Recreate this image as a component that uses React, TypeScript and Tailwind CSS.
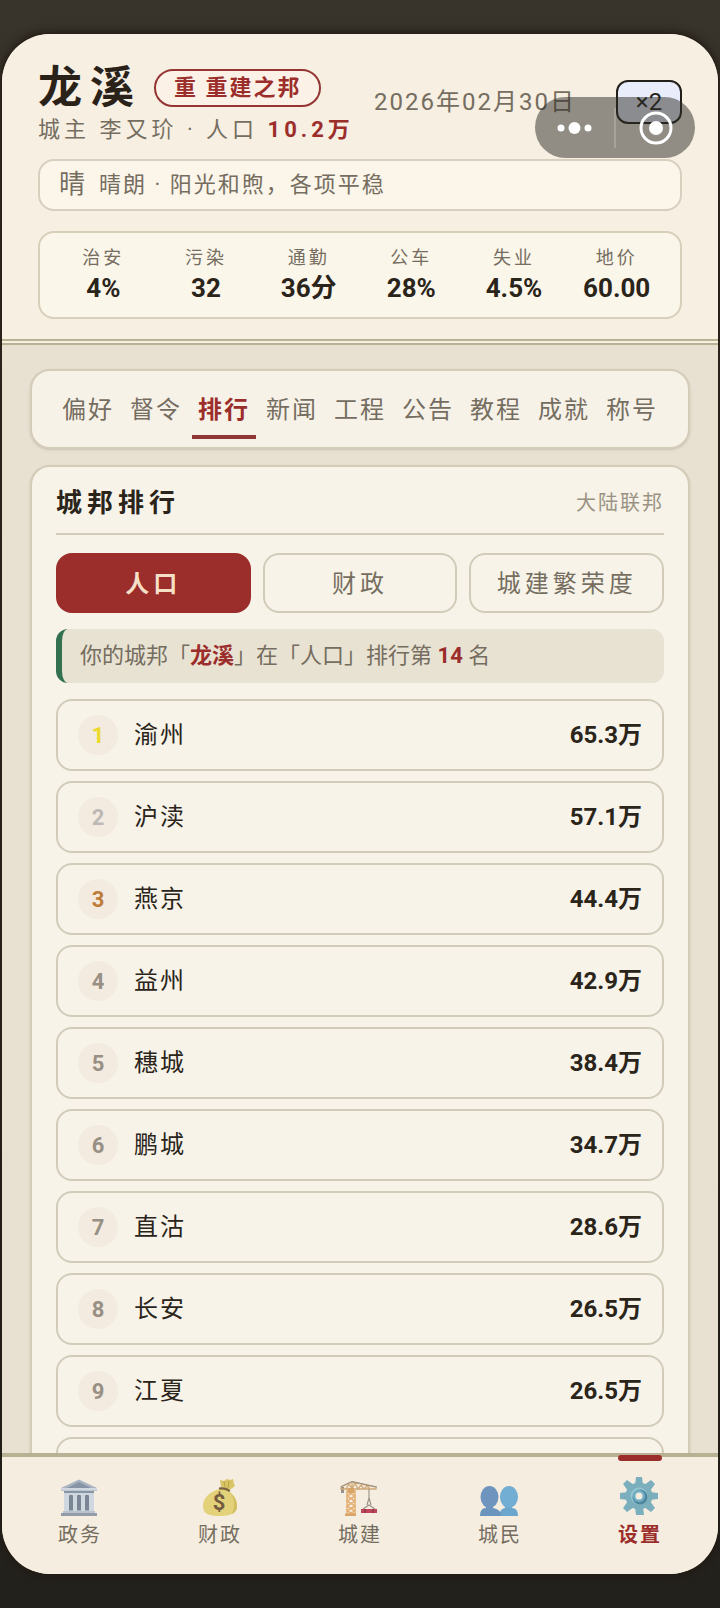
import { useState } from "react";
import type { ReactNode } from "react";
import clsx from "clsx";

const stats = [
  { label: "治安", value: "4%" },
  { label: "污染", value: "32" },
  { label: "通勤", value: "36分" },
  { label: "公车", value: "28%" },
  { label: "失业", value: "4.5%" },
  { label: "地价", value: "60.00" },
];

const sections = ["偏好", "督令", "排行", "新闻", "工程", "公告", "教程", "成就", "称号"];

const boards = ["人口", "财政", "城建繁荣度"];

const cities = [
  { name: "渝州", value: "65.3万" },
  { name: "沪渎", value: "57.1万" },
  { name: "燕京", value: "44.4万" },
  { name: "益州", value: "42.9万" },
  { name: "穗城", value: "38.4万" },
  { name: "鹏城", value: "34.7万" },
  { name: "直沽", value: "28.6万" },
  { name: "长安", value: "26.5万" },
  { name: "江夏", value: "26.5万" },
];

// gold, silver and bronze; everyone else is grey
const medals = ["text-[#ecd92c]", "text-[#bdb8b4]", "text-[#bf7d3c]"];

function HallIcon() {
  return (
    <svg viewBox="0 0 40 40" className="h-10 w-10" aria-hidden="true">
      <path d="M20 2.500 38 11v3H2v-3z" fill="#a9b4c1" />
      <path d="M20 5 32 11H8z" fill="#8794a6" />
      <path d="M2 11h36v2.500H2z" fill="#d0d7df" />
      <path d="M5 14h30v2H5z" fill="#8a95a4" />
      <path d="M5 16h30v19H5z" fill="#cfd7e1" />
      <path d="M10 18.500q2-1.500 4 0v15h-4zM18 18.500q2-1.500 4 0v15h-4zM26 18.500q2-1.500 4 0v15h-4z" fill="#7b8694" />
      <path d="M4 34h32v2.500H4z" fill="#b9c2cd" />
      <path d="M2 36h36v3H2z" fill="#929ba8" />
    </svg>
  );
}

function MoneyIcon() {
  return (
    <svg viewBox="0 0 40 40" className="h-10 w-10" aria-hidden="true">
      <path d="m22 10-1-7 4 1 3-2 3 1 3-1 1 5 1 2-4 3-3 1z" fill="#d9c566" />
      <path d="m25 4 1 6M30 4l-1 7" stroke="#b7a248" strokeWidth="1" />
      <path d="M21 12c5-1 8 0 10 3 4 3 7 8 7 14 0 7-6 10-17 10S4 37 4 29c0-8 7-15 17-17z" fill="#e3d27a" />
      <path d="M31 16c5 6 5 13 2 21 4-2 5-5 5-8 0-6-3-10-7-13z" fill="#d3be60" />
      <path d="M21 11.500q5-.500 9 2" stroke="#7c6443" strokeWidth="2.400" strokeLinecap="round" fill="none" />
      <text x="20" y="33" textAnchor="middle" fontSize="22" fontWeight="700" fill="#755c40">$</text>
    </svg>
  );
}

function CraneIcon() {
  return (
    <svg viewBox="0 0 40 40" className="h-10 w-10" fill="none" aria-hidden="true">
      <path d="M2 10h3v6H2z" fill="#94928c" />
      <path d="M2 10 13 5l24 5v2H2zM13 5v7M7 12l3-5 3 5 3-6 3 6 3-4 3 4 3-3 3 3" stroke="#d0a877" strokeWidth="1.300" />
      <path d="M2 9.500 13 4.500l25 5.500" stroke="#969087" strokeWidth="1" />
      <path d="M8 13v25M16 13v25M8 14l8 5-8 5 8 5-8 5 8 4M16 14l-8 5 8 5-8 5 8 5-8 4" stroke="#e4af72" strokeWidth="1.500" />
      <path d="M9 11h6v5H9zM6 36.500h11V39H6z" fill="#d9a468" />
      <path d="M30 12v9m0 0-2 7m2-7 2 7M24 32l6-4 6 4" stroke="#969087" strokeWidth="1.100" />
      <path d="M22 32h16v4H22z" fill="#c04558" />
      <path d="M26 32v4m8-4v4" stroke="#823442" strokeWidth="1.200" />
    </svg>
  );
}

function PeopleIcon() {
  return (
    <svg viewBox="0 0 40 40" className="h-10 w-10" aria-hidden="true">
      <path d="M26 27h7v4c4 0 6 3 6 8H20c0-4 2-7 6-8z" fill="#6ca6cd" />
      <ellipse cx="30" cy="20" rx="9" ry="11" fill="#72add4" />
      <path d="M7 27h7v4c5 1 8 3 8 8H1c0-5 2-8 6-8z" fill="#6b95bd" />
      <ellipse cx="10.500" cy="20" rx="9" ry="11" fill="#6f95bf" />
    </svg>
  );
}

function GearIcon() {
  return (
    <svg viewBox="0 0 40 40" className="h-10 w-10" aria-hidden="true">
      <g fill="#7cafbd">
        <path d="m17 0-1 8h8l-1-8zM17 38l-1-8h8l1 8z" />
        <path d="m1 16 8-1v8l-8-1zM39 16l-8-1v8l8-1z" />
        <path d="m4 7 4-4 7 5-6 6zM36 7l-4-4-7 5 6 6zM4 31l4 4 7-5-6-6zM36 31l-4 4-7-5 6-6z" />
        <circle cx="20" cy="19" r="13.500" />
      </g>
      <circle cx="20" cy="19" r="8.500" fill="#93c5d1" />
      <circle cx="21" cy="20" r="7.500" fill="#4f87a0" />
      <circle cx="20" cy="19" r="6" fill="#72aec4" />
      <circle cx="20" cy="19" r="3.500" fill="#f3ecdf" />
    </svg>
  );
}

const navItems: { label: string; icon: ReactNode }[] = [
  { label: "政务", icon: <HallIcon /> },
  { label: "财政", icon: <MoneyIcon /> },
  { label: "城建", icon: <CraneIcon /> },
  { label: "城民", icon: <PeopleIcon /> },
  { label: "设置", icon: <GearIcon /> },
];

// Mini-program capsule, floats above the header
function Capsule() {
  return (
    <div className="absolute top-[63px] right-[23px] flex h-[61px] w-40 items-center rounded-full bg-[#2c2c26]/50">
      <button type="button" aria-label="更多" className="flex h-full flex-1 items-center justify-center">
        <svg viewBox="0 0 36 14" className="h-3.5 w-9" fill="#fff">
          <circle cx="4" cy="7" r="3.500" />
          <circle cx="17.500" cy="7" r="6" />
          <circle cx="31" cy="7" r="3.500" />
        </svg>
      </button>
      <span className="h-10 w-0.5 bg-white/20" />
      <button type="button" aria-label="关闭" className="flex h-full flex-1 items-center justify-center">
        <svg viewBox="0 0 34 34" className="h-[34px] w-[34px]">
          <circle cx="17" cy="17" r="15" fill="none" stroke="#fff" strokeWidth="3" />
          <circle cx="17" cy="17" r="7" fill="#fff" />
        </svg>
      </button>
    </div>
  );
}

function Header() {
  return (
    <header className="flex-none border-b-[6px] border-double border-[#b9b193] bg-[#f6efe2] px-9 pt-6 pb-5">
      <div className="flex items-center justify-between">
        <div className="pt-1">
          <div className="flex items-center gap-3">
            <h1 className="text-[44px] leading-[52px] font-bold tracking-[8px] text-[#2a2119]">龙溪</h1>
            <span className="rounded-full border-2 border-[#943433] bg-[#fbf1e6] px-[18px] text-[22px] leading-[34px] font-bold tracking-[2px] text-[#9b2d2b]">
              重 重建之邦
            </span>
          </div>
          <p className="text-[22px] leading-8 tracking-[4px] text-[#756d60]">
            城主 李又玠 · 人口 <b className="font-bold text-[#9b2d2b]">10.2万</b>
          </p>
        </div>
        <div className="flex items-center gap-10">
          <time dateTime="2026-02" className="text-2xl tracking-[2px] whitespace-nowrap text-[#756d60]">
            2026年02月30日
          </time>
          <button
            type="button"
            className="h-11 w-[66px] rounded-xl border-2 border-[#221f1a] bg-[#e9edfb] text-2xl text-[#26221c]"
          >
            ×2
          </button>
        </div>
      </div>

      <div className="mt-[13px] flex h-[52px] items-center gap-3.5 rounded-2xl border-2 border-[#d8cfbf] bg-[#fbf5ea] px-[19px] pb-0.5 text-[#756d60]">
        <span className="text-[26px]">晴</span>
        <span className="text-[22px] tracking-[2px]">晴朗 · 阳光和煦，各项平稳</span>
      </div>

      <dl className="mt-5 grid h-22 grid-cols-6 items-center rounded-2xl border-2 border-[#d8cfbb] bg-[#fbf6ea] px-3 pb-0.5">
        {stats.map((s) => (
          <div key={s.label} className="text-center">
            <dt className="text-[18px] leading-7 tracking-[3px] text-[#756d60]">{s.label}</dt>
            <dd className="text-[26px] leading-8 font-bold text-[#2a241a]">{s.value}</dd>
          </div>
        ))}
      </dl>
    </header>
  );
}

export default function App() {
  const [section, setSection] = useState("排行");
  const [board, setBoard] = useState("人口");
  const [page, setPage] = useState("设置");

  return (
    <div className="h-screen bg-linear-to-b from-[#38332b] to-[#23211c] px-0.5 py-[34px] font-['Roboto','Noto_Sans_CJK_SC',sans-serif]">
      <div className="relative flex h-full flex-col overflow-hidden rounded-[48px] bg-[#e8e1d1] shadow-[0_0_8px_2px_#211a12]">
        <Header />

        <main className="flex min-h-0 flex-1 flex-col gap-4 overflow-y-auto px-7 pt-6 [scrollbar-width:none]">
          <nav className="grid flex-none grid-cols-9 gap-1 rounded-[20px] border-2 border-[#d5ccb9] bg-[#f7f2e8] px-6 py-2 shadow-sm">
            {sections.map((s) => (
              <button
                key={s}
                type="button"
                onClick={() => setSection(s)}
                className={clsx(
                  "h-15 border-b-4 pt-1.5 text-2xl tracking-[2px] whitespace-nowrap",
                  s === section ? "border-b-[#8f3534] font-bold text-[#9b2d2b]" : "border-b-transparent text-[#756d60]"
                )}
              >
                {s}
              </button>
            ))}
          </nav>

          <section className="flex-none rounded-[20px] border-2 border-[#d5ccb7] bg-[#f7f3e8] px-6 pt-5 pb-6 shadow-sm">
            <div className="flex items-center justify-between border-b-2 border-[#d2ccb9] pb-3.5">
              <h2 className="text-[26px] leading-8 font-bold tracking-[5px] text-[#2a241a]">城邦排行</h2>
              <span className="text-xl leading-8 tracking-[2px] text-[#9a9283]">大陆联邦</span>
            </div>

            <div className="mt-[18px] grid grid-cols-3 gap-3">
              {boards.map((b) => (
                <button
                  key={b}
                  type="button"
                  onClick={() => setBoard(b)}
                  className={clsx(
                    "h-15 rounded-2xl border-2 pt-0.5 text-2xl tracking-[4px]",
                    b === board
                      ? "border-[#9b2d2b] bg-[#9b2d2b] font-bold text-[#f5dfc6]"
                      : "border-[#d2cbb9] text-[#756d60]"
                  )}
                >
                  {b}
                </button>
              ))}
            </div>

            <p className="mt-4 rounded-xl border-l-[6px] border-[#33704f] bg-[#e8e2d3] px-[18px] text-[22px] leading-[54px] text-[#756d60]">
              你的城邦「<b className="font-bold text-[#9b2d2b]">龙溪</b>」在「{board}」排行第{" "}
              <b className="font-bold text-[#9b2d2b]">14</b> 名
            </p>

            <ol className="mt-4 flex flex-col gap-2.5">
              {cities.map((c, i) => (
                <li key={c.name} className="flex h-18 items-center gap-4 rounded-2xl border-2 border-[#d2cbb9] px-5">
                  <span
                    className={clsx(
                      "flex h-10 w-10 flex-none items-center justify-center rounded-full bg-[#f3ebe0] text-[22px] font-bold",
                      medals[i] ?? "text-[#989084]"
                    )}
                  >
                    {i + 1}
                  </span>
                  <span className="flex-1 text-2xl tracking-[2px] text-[#2a241a]">{c.name}</span>
                  <span className="text-2xl font-bold text-[#2a241a]">{c.value}</span>
                </li>
              ))}
              <li aria-hidden="true" className="h-18 rounded-2xl border-2 border-[#d2cbb9]" />
            </ol>
          </section>
        </main>

        <nav className="grid flex-none grid-cols-5 border-t-4 border-[#b9b193] bg-[#f5ede0] px-2">
          {navItems.map((n) => {
            const active = n.label === page;
            return (
              <button
                key={n.label}
                type="button"
                onClick={() => setPage(n.label)}
                className="relative flex flex-col items-center pt-5 pb-[23px]"
              >
                {active && <span className="absolute -top-0.5 h-1.5 w-11 rounded-full bg-[#9b2d2b]" />}
                <span className="pr-0.5">{n.icon}</span>
                <span
                  className={clsx(
                    "mt-0.5 text-xl leading-8 tracking-[2px]",
                    active ? "font-bold text-[#9b2d2b]" : "text-[#756d60]"
                  )}
                >
                  {n.label}
                </span>
              </button>
            );
          })}
        </nav>

        <Capsule />
      </div>
    </div>
  );
}
